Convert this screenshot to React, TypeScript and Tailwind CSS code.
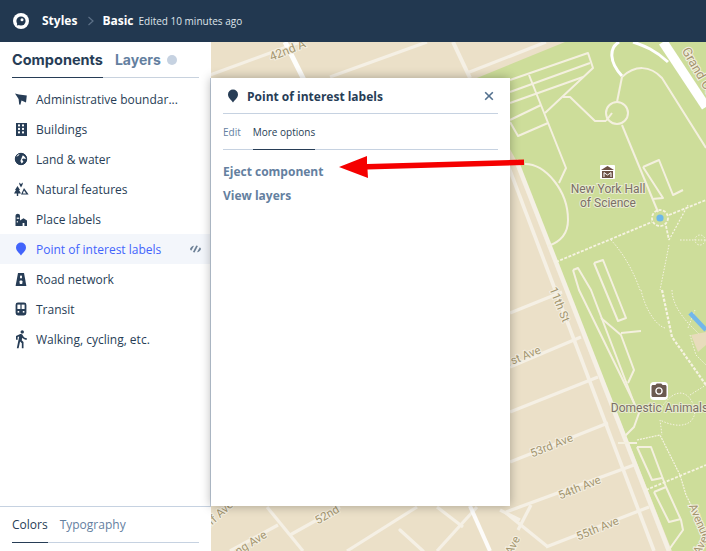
import React from "react";
import { MdDirectionsWalk, MdPhotoCamera } from "react-icons/md";

const DARK = "#273d56";

function Pin({ color = DARK }: { color?: string }) {
  return (
    <svg width="14" height="16" viewBox="0 0 14 16">
      <path d="M7 14.6 C5.8 12.4 2 10.4 2 6.6 A5 5 0 0 1 12 6.6 C12 10.4 8.2 12.4 7 14.6Z" fill={color} />
    </svg>
  );
}

function Flag() {
  return (
    <svg width="16" height="16" viewBox="0 0 16 16">
      <path d="M2 2.5 L6 3.6 L13.8 4.6 L13 11.4 L8.5 9.4 L7.4 13.8 L6.2 13.6 L5.6 8 Z" fill={DARK} />
    </svg>
  );
}

function Building() {
  const w = [];
  for (let r = 0; r < 3; r++) for (let c = 0; c < 2; c++) w.push(<rect key={`${r}${c}`} x={5 + c * 4} y={3.4 + r * 3.5} width="2" height="2" fill="#fff" />);
  return (
    <svg width="16" height="16" viewBox="0 0 16 16">
      <rect x="3" y="2" width="11" height="13" fill={DARK} />
      {w}
    </svg>
  );
}

function Globe() {
  return (
    <svg width="16" height="16" viewBox="0 0 16 16">
      <circle cx="8" cy="8" r="6" fill={DARK} />
      <path d="M3.2 6 C5 5 6.2 4.6 6.6 2.8 L4.6 3.4Z M9.6 4.4 C11 4.6 12.4 6 13 8 L10.4 7.4 L9 8.6 L10.4 10.8 L8.6 12.6 L7.4 10 L8.4 7.4Z" fill="#fff" />
      <circle cx="8" cy="8" r="5.7" fill="none" stroke={DARK} strokeWidth="1" />
    </svg>
  );
}

function Natural() {
  return (
    <svg width="16" height="16" viewBox="0 0 16 16">
      <path d="M4.5 5 L7 9 L6 9 L8 12.6 L5.2 12.6 L5.2 15 L3.8 15 L3.8 12.6 L1 12.6 L3 9 L2 9Z" fill={DARK} />
      <path d="M11 7 L15.6 13.4 L8 13.4Z" fill={DARK} />
      <path d="M11 9.6 L13.2 12.4 L9.8 12.4Z" fill="#fff" />
      <path d="M6 1.6 L8 3 L10 1.6 L9.4 4 L8 6.4 L6.6 4Z" fill={DARK} />
    </svg>
  );
}

function Place() {
  return (
    <svg width="16" height="16" viewBox="0 0 16 16">
      <path d="M2.5 15 V5 C2.5 2 7 2 7 5 V15Z" fill={DARK} />
      <rect x="3.8" y="6.5" width="1" height="1.5" fill="#fff" />
      <rect x="5.2" y="6.5" width="1" height="1.5" fill="#fff" />
      <rect x="3.8" y="10" width="1" height="1.5" fill="#fff" />
      <path d="M7 9.4 L10.5 7.2 L14 9.4 V15 H11.4 V12 H9.6 V15 H7Z" fill={DARK} />
    </svg>
  );
}

function Road() {
  return (
    <svg width="16" height="16" viewBox="0 0 16 16">
      <path d="M5 2 H11 L13.4 15 H2.6Z" fill={DARK} />
      <rect x="7" y="4.4" width="2" height="3" rx="0.8" fill="#fff" />
      <rect x="6.6" y="9.4" width="2.8" height="3.6" rx="0.8" fill="#fff" />
    </svg>
  );
}

function Transit() {
  return (
    <svg width="16" height="16" viewBox="0 0 16 16">
      <rect x="2.6" y="1.6" width="10.8" height="12.8" rx="2.4" fill={DARK} />
      <rect x="4.4" y="3.6" width="3" height="4.4" fill="#fff" />
      <rect x="8.6" y="3.6" width="3" height="4.4" fill="#fff" />
      <rect x="4.6" y="10" width="1.6" height="1.6" fill="#fff" />
      <rect x="9.8" y="10" width="1.6" height="1.6" fill="#fff" />
    </svg>
  );
}

function HiddenEye() {
  return (
    <svg width="13" height="10" viewBox="0 0 14 10">
      <path d="M1 5 C2 3 3.4 1.8 5.4 1.5 L2.4 7 C1.8 6.5 1.4 5.8 1 5Z" fill="#6b7f95" />
      <path d="M7.8 1.2 L9.6 1.8 L6 8.8 L4.2 8.2Z" fill="#6b7f95" />
      <path d="M13 5 C12 7 10.6 8.2 8.6 8.5 L11.6 3 C12.2 3.5 12.6 4.2 13 5Z" fill="#6b7f95" />
    </svg>
  );
}

const items: { label: string; icon: React.ReactNode; active?: boolean }[] = [
  { label: "Administrative boundar...", icon: <Flag /> },
  { label: "Buildings", icon: <Building /> },
  { label: "Land & water", icon: <Globe /> },
  { label: "Natural features", icon: <Natural /> },
  { label: "Place labels", icon: <Place /> },
  { label: "Point of interest labels", icon: <Pin color="#4264fb" />, active: true },
  { label: "Road network", icon: <Road /> },
  { label: "Transit", icon: <Transit /> },
  { label: "Walking, cycling, etc.", icon: <MdDirectionsWalk size={20} color={DARK} className="-mx-0.5" /> },
];

const R = "#f5f0e5";
const P = "#f4f0df";

function Lbl({ x, y, r = 0, s = 11.5, a = "middle", children }: { x: number; y: number; r?: number; s?: number; a?: "middle" | "start"; children: React.ReactNode }) {
  return (
    <text
      x={x}
      y={y}
      transform={`rotate(${r} ${x} ${y})`}
      textAnchor={a}
      fontFamily="Roboto, sans-serif"
      fontSize={s}
      fill="#a4966f"
      stroke="#f4efe2"
      strokeWidth="2"
      paintOrder="stroke"
    >
      {children}
    </text>
  );
}

function Poi({ x, y, children }: { x: number; y: number; children: React.ReactNode }) {
  return (
    <text x={x} y={y} textAnchor="middle" fontFamily="Roboto, sans-serif" fontSize="12" fill="#7b6f66" stroke="#e8ecd0" strokeWidth="2" paintOrder="stroke">
      {children}
    </text>
  );
}

function MapArt() {
  return (
    <svg className="absolute inset-0 h-full w-full" viewBox="0 42 706 509" preserveAspectRatio="none">
      <rect x="0" y="42" width="706" height="509" fill="#ebe0c8" />
      <path d="M472 80 L565 42 H706 V551 H672 L516 160 Z" fill="#cddd9a" />

      <g stroke={R} strokeWidth="3.2" fill="none">
        <path d="M210 75 L300 42" />
        <path d="M330 77 L427 42" />
        <path d="M467 73 L546 42" />
        <path d="M453 42 L470 78" strokeWidth="4" />
        <path d="M506 160 L654 551" strokeWidth="3.6" />
        <path d="M516 160 L669 551" strokeWidth="4.6" />
        <path d="M510 313 L562 292" />
        <path d="M510 367 L581 337" />
        <path d="M510 412 L598 377" />
        <path d="M510 462 L608 423" />
        <path d="M506 512 L634 465" />
        <path d="M546 547 L649 507" />
        <path d="M531 505 L518 530" />
        <path d="M506 513 L548 547" />
        <path d="M267 507 L303 551" />
        <path d="M230 551 L278 525" />
        <path d="M290 535 L340 507" />
        <path d="M347 551 L417 507" />
        <path d="M400 530 L423 551" strokeLinecap="round" />
        <path d="M437 507 L463 527" />
        <path d="M437 551 L477 507" />
        <path d="M500 510 L520 520" />
      </g>
      <path d="M285 42 L304 80" stroke="#fff" strokeWidth="5" fill="none" opacity="0.95" />
      <path d="M470 506 L490 551" stroke="#fff" strokeWidth="4" fill="none" opacity="0.9" />

      <g stroke="#fff" fill="none">
        <path d="M663 42 L706 107" strokeWidth="9.5" />
        <path d="M633 42 C645 46 655 50 668 62" strokeWidth="3" />
        <path d="M619 42 C609 48 609 62 622 76" strokeWidth="3" />
      </g>

      <g stroke={P} strokeWidth="2" fill="none" strokeLinejoin="round">
        <path d="M510 80 L588 53 L593 68 L545 113" />
        <path d="M510 92 L590 63" />
        <path d="M510 103 L583 77" />
        <path d="M510 120 L541 105" />
        <path d="M510 122 L518 136 L548 123" />
        <path d="M529 75 L566 168 L559 183" />
        <path d="M563 97 L570 97 L595 121 L606 121" />
        <path d="M622 77 L617 102" />
        <circle cx="617" cy="113" r="11" />
        <path d="M606 121 L612 113" />
        <path d="M622 125 L658 212" />
        <path d="M622 77 C635 65 650 65 662 78 L706 148" />
        <path d="M643 167 L659 160 L673 195 L683 190" />
        <path d="M643 167 L663 198 L652 199" />
        <path d="M525 164 C545 164 568 190 568 220 C568 235 560 242 548 246" />
        <path d="M573 270 L578 268 L591 290 L634 403" />
        <path d="M573 270 L579 290 L639 413 L634 427 L624 437" />
        <path d="M594 263 L603 260 L626 318 L618 321 L594 263" />
        <path d="M601 318 L621 335 L634 370 L628 383 M621 333 L641 331" />
        <path d="M618 443 L637 443 M637 447 L651 447 L666 487 L681 520 L683 530 L668 551" />
        <path d="M637 447 L652 480 L662 478 M654 492 L666 487 M654 492 L669 522 L681 519" />
      </g>

      <g stroke="#f6f3e2" fill="none" strokeWidth="1.8" strokeDasharray="3 1.5">
        <path d="M556 262 L652 222" />
        <path d="M669 215 L706 200" />
        <circle cx="660" cy="218" r="8" />
        <path d="M666 226 L669 240" />
        <path d="M669 240 L688 205" strokeWidth="1.2" strokeDasharray="2 1.5" />
        <path d="M646 490 L706 465" />
        <path d="M662 290 L672 337 L706 385" strokeWidth="2.2" />
        <path d="M637 440 L660 435 L680 475 L686 495 L706 535" strokeWidth="1.2" strokeDasharray="2 1" />
      </g>
      <g stroke="#f6f3e2" fill="none" strokeWidth="1" strokeDasharray="1.5 1.5">
        <path d="M611 240 C625 255 635 275 640 290" />
        <path d="M669 245 L660 290" />
        <path d="M680 240 C690 240 695 240 706 240" />
        <circle cx="700" cy="240" r="5" />
        <path d="M641 290 C645 308 655 325 665 328" />
        <path d="M672 290 C672 305 685 320 690 325 L700 335 M688 328 L695 310" />
        <path d="M690 335 L696 355 L706 365" />
        <path d="M660 410 C675 385 690 390 695 410 C695 425 680 430 660 420 L662 435" />
        <path d="M690 395 L706 385" />
      </g>

      <path d="M691 335 L706 332 V345 L698 352 Z" fill="#e8dcbc" />
      <path d="M690 313 L706 330" stroke="#73b7ea" strokeWidth="4.5" fill="none" />
      <circle cx="660" cy="218" r="3.6" fill="#6db7ea" />

      <g>
        <rect x="600" y="165" width="15" height="14" fill="#fff" rx="1" />
        <path d="M607.5 166 L614 170 H601Z M602 171 H613 V178 H602Z" fill="#6b5044" />
        <path d="M604 177 V172.6 L607.5 175 L611 172.6 V177" stroke="#fff" strokeWidth="1" fill="none" />
      </g>
      <Poi x={608} y={193}>New York Hall</Poi>
      <Poi x={608} y={207}>of Science</Poi>
      <Poi x={659.5} y={412}>Domestic Animals</Poi>

      <Lbl x={289} y={54} r={-22} s={12}>42nd A</Lbl>
      <Lbl x={556} y={306} r={68} s={11.5}>11th St</Lbl>
      <Lbl x={524} y={360} r={-22} s={11.5}>1st Ave</Lbl>
      <Lbl x={553} y={449} r={-22} s={11.5}>53rd Ave</Lbl>
      <Lbl x={581} y={491} r={-22} s={11.5}>54th Ave</Lbl>
      <Lbl x={599} y={532} r={-22} s={11.5}>55th Ave</Lbl>
      <Lbl x={696} y={523} r={67} s={11.5}>Avenue</Lbl>
      <Lbl x={681.5} y={50.5} r={60} s={13} a="start">Grand Central</Lbl>
      <Lbl x={516} y={547} r={-62} s={11.5}>Ave</Lbl>
      <Lbl x={218} y={520} r={-42} s={11.5}>Cliff Ave</Lbl>
      <Lbl x={253} y={546} r={-32} s={11.5}>ng Ave</Lbl>
      <Lbl x={329} y={518} r={-30} s={11.5}>52nd</Lbl>
      <Lbl x={704} y={547} r={-62} s={11.5}>Ave</Lbl>
    </svg>
  );
}

export default function App() {
  return (
    <div className="relative flex h-[551px] w-[706px] flex-col overflow-hidden font-['Open_Sans',sans-serif] text-[#273d56]">
      <header className="z-20 flex h-[42px] shrink-0 items-center bg-[#223850] pl-3 text-white">
        <svg width="18" height="18" viewBox="0 0 18 18" className="mr-3 shrink-0">
          <circle cx="9" cy="9" r="8" fill="#fff" />
          <circle cx="9" cy="9" r="4.6" fill="#223850" />
          <path d="M4.8 13.4 L6 8.6 L9.6 12.4Z" fill="#223850" />
          <circle cx="10" cy="7.8" r="1.5" fill="#fff" />
        </svg>
        <span className="text-[12px] font-bold">Styles</span>
        <svg width="8" height="10" viewBox="0 0 8 10" className="ml-[10px] mr-[7px] shrink-0">
          <path d="M1.5 1 L6 5 L1.5 9" stroke="#5d7188" strokeWidth="1.2" fill="none" />
        </svg>
        <span className="text-[12px] font-bold">Basic</span>
        <span className="ml-[5px] text-[10px] text-[#dfe4ea]">Edited 10 minutes ago</span>
      </header>

      <main className="relative flex min-h-0 flex-1">
        <MapArt />

        <aside className="relative z-10 flex w-[211px] shrink-0 flex-col">
          <div className="h-[36px] shrink-0 bg-white px-3">
            <div className="flex h-[36px] items-stretch border-b border-[#c8d2de]">
              <div className="-mb-px flex items-center border-b border-[#273d56] font-['Inter',sans-serif] text-[14.5px] font-bold text-[#273d56]">
                Components
              </div>
              <div className="ml-3 flex items-center font-['Inter',sans-serif] text-[14px] font-bold text-[#64809f]">
                Layers
                <span className="ml-[6px] h-[10px] w-[10px] rounded-full bg-[#c6d2e1]" />
              </div>
            </div>
          </div>

          <div className="flex min-h-0 flex-1 flex-col border-r border-[#c6d2e1] bg-white pt-[6px]">
            {items.map((it) => (
              <div key={it.label} className={`flex h-[30px] items-center pl-[13px] pr-2 text-[12px] ${it.active ? "bg-[#f3f6fb] text-[#4264fb]" : ""}`}>
                <span className="flex w-[16px] shrink-0 items-center justify-center">{it.icon}</span>
                <span className="ml-[7px] flex-1 translate-y-px whitespace-nowrap">{it.label}</span>
                {it.active && <HiddenEye />}
              </div>
            ))}
          </div>

          <div className="h-[45px] shrink-0 border-t border-[#c6d2e1] bg-white px-3">
            <div className="flex h-[36px] items-stretch border-b border-[#c6d2e1] text-[12px]">
              <div className="-mb-px flex items-center border-b border-[#273d56]">Colors</div>
              <div className="ml-3 flex items-center text-[#64809f]">Typography</div>
            </div>
          </div>
        </aside>

        <section className="absolute left-[211px] top-[36px] z-10 h-[428px] w-[299px] bg-white px-3 shadow-[0_0_10px_rgba(0,0,0,0.3)]">
          <div className="flex h-[36px] items-center border-b border-[#c6d2e1] pl-[3px] pr-[3px]">
            <Pin />
            <span className="ml-[7px] flex-1 translate-y-px text-[12px] font-bold">Point of interest labels</span>
            <svg width="12" height="12" viewBox="0 0 12 12">
              <path d="M2.2 2.2 L9.8 9.8 M9.8 2.2 L2.2 9.8" stroke="#52708e" strokeWidth="1.6" />
            </svg>
          </div>
          <div className="flex h-[36px] items-stretch border-b border-[#c6d2e1] text-[10px]">
            <div className="flex items-center pt-[2px] text-[#64809f]">Edit</div>
            <div className="-mb-px ml-[12px] flex items-center border-b border-[#273d56] pt-[2px]">More options</div>
          </div>
          <div className="flex flex-col gap-[7px] pt-[13px] text-[12px] font-bold leading-[17px] text-[#64809f]">
            <div>Eject component</div>
            <div>View layers</div>
          </div>
        </section>
      </main>

      <svg className="pointer-events-none absolute left-[335px] top-[150px] z-30" width="195" height="34" viewBox="335 150 195 34">
        <path d="M339 167 L367 156 L367 164 L524 159.5 L524 165 L367.5 169.5 L368 178 Z" fill="#f50000" />
      </svg>
      <MdPhotoCamera size={18} color="#6b5a50" className="absolute left-[650px] top-[382px] z-[5] rounded-sm bg-white" />
    </div>
  );
}
